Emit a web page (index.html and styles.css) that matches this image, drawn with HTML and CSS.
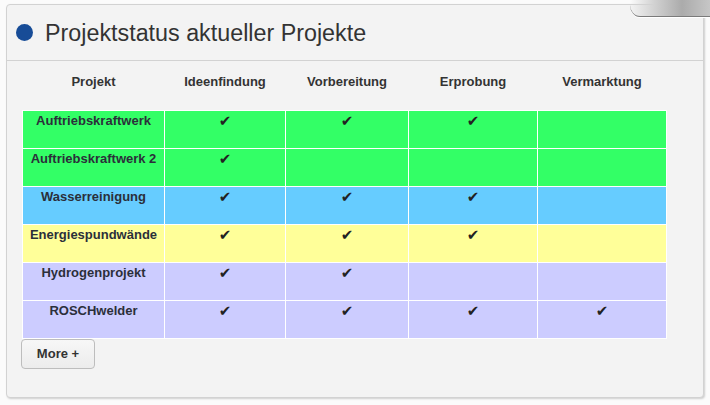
FILE: index.html
```html
<!DOCTYPE html>
<html lang="de">
<head>
<meta charset="utf-8">
<title>Projektstatus</title>
<link rel="stylesheet" href="styles.css">
</head>
<body>
<div class="curl"></div>
<div class="panel">
  <div class="panel-head">
    <span class="dot"></span>
    <h2 class="title">Projektstatus aktueller Projekte</h2>
  </div>
  <div class="panel-body">
    <table class="status">
      <colgroup>
        <col class="c1"><col class="c2"><col class="c3"><col class="c4"><col class="c5">
      </colgroup>
      <thead>
        <tr><th>Projekt</th><th>Ideenfindung</th><th>Vorbereitung</th><th>Erprobung</th><th>Vermarktung</th></tr>
      </thead>
      <tbody>
        <tr class="green"><td>Auftriebskraftwerk</td><td class="ck">✔</td><td class="ck">✔</td><td class="ck">✔</td><td></td></tr>
        <tr class="green"><td>Auftriebskraftwerk 2</td><td class="ck">✔</td><td></td><td></td><td></td></tr>
        <tr class="blue"><td>Wasserreinigung</td><td class="ck">✔</td><td class="ck">✔</td><td class="ck">✔</td><td></td></tr>
        <tr class="yellow"><td>Energiespundwände</td><td class="ck">✔</td><td class="ck">✔</td><td class="ck">✔</td><td></td></tr>
        <tr class="lilac"><td>Hydrogenprojekt</td><td class="ck">✔</td><td class="ck">✔</td><td></td><td></td></tr>
        <tr class="lilac"><td>ROSCHwelder</td><td class="ck">✔</td><td class="ck">✔</td><td class="ck">✔</td><td class="ck">✔</td></tr>
      </tbody>
    </table>
    <button class="more" type="button">More +</button>
  </div>
</div>
</body>
</html>
```

FILE: styles.css
```css
html, body {
  margin: 0;
  padding: 0;
}
body {
  background: #fbfbfb;
  font-family: "Liberation Sans", Arial, sans-serif;
  color: #333;
  width: 710px;
  height: 405px;
  overflow: hidden;
  position: relative;
}
.curl {
  position: absolute;
  top: 0;
  right: 0;
  width: 80px;
  height: 16px;
  background: linear-gradient(to right, rgba(220,220,220,0) 0%, #d2d2d2 30%, #ababab 65%, #c6c6c6 100%);
  border-bottom: 1px solid #7a7a7a;
  border-bottom-left-radius: 10px 12px;
  box-shadow: 0 1px 0 #fff;
  z-index: 2;
}
.panel {
  margin: 4px 6px 0 6px;
  height: 392px;
  border: 1px solid #d2d2d2;
  border-radius: 4px;
  background: #f3f3f3;
  box-shadow: 1px 1px 2px rgba(0,0,0,0.18);
}
.panel-head {
  height: 55px;
  border-bottom: 1px solid #d2d2d2;
  display: flex;
  align-items: center;
  padding-left: 9px;
  gap: 12px;
}
.dot {
  width: 17px;
  height: 17px;
  border-radius: 50%;
  background: #174c97;
  flex: none;
}
.title {
  margin: 0;
  font-weight: normal;
  font-size: 23.3px;
  color: #333;
  line-height: 28px;
}
.panel-body {
  padding: 0 0 0 15px;
}
.status {
  border-collapse: collapse;
  width: 644px;
  table-layout: fixed;
}
.c1 { width: 142px; }
.c2 { width: 121px; }
.c3 { width: 123px; }
.c4 { width: 129px; }
.c5 { width: 129px; }
.status th {
  height: 49px;
  box-sizing: border-box;
  padding: 12px 0 0 0;
  vertical-align: top;
  font-size: 13px;
  line-height: 18px;
  font-weight: bold;
  color: #333;
  text-align: center;
}
.status td {
  height: 38px;
  box-sizing: border-box;
  border: 1px solid #fff;
  padding: 2px 0 0 0;
  vertical-align: top;
  text-align: center;
  font-size: 13px;
  line-height: 16px;
  font-weight: bold;
  color: #2b2f3a;
}
.status td.ck {
  font-family: "DejaVu Sans", sans-serif;
  font-size: 15px;
  line-height: 16px;
  color: #222;
  font-weight: normal;
}
.green td { background: #33ff66; }
.blue td { background: #66ccff; }
.yellow td { background: #ffff99; }
.lilac td { background: #ccccff; }
.more {
  margin: 0 0 0 -1px;
  width: 74px;
  height: 30px;
  border: 1px solid #bdbdbd;
  border-radius: 4px;
  background: linear-gradient(#f7f7f7, #ececec);
  font-family: "Liberation Sans", Arial, sans-serif;
  font-size: 13px;
  font-weight: bold;
  color: #333;
  padding: 0;
  display: block;
}
```
